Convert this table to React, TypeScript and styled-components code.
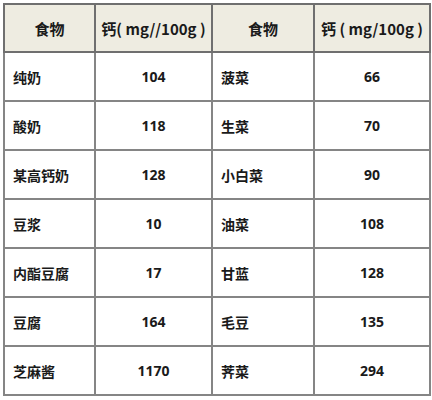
import React from "react"
import styled, {createGlobalStyle} from "styled-components"

const GlobalStyle = createGlobalStyle`
    body {
        margin: 0;
        background: #ffffff;
        font-family: "Noto Sans CJK SC", "Noto Sans", sans-serif;
        color: #1a1a1a;
    }
`

const Page = styled.div`
    padding: 3px 0 0 3px;
`

const Table = styled.table`
    border-collapse: collapse;
    table-layout: fixed;
    width: 426px;
    border: 2px solid #858585;
    font-size: 14px;
`

const HeadCell = styled.th`
    height: 46px;
    padding: 0;
    background: #eeece1;
    border: 2px solid #6f6f6f;
    font-size: 15px;
    font-weight: 700;
    text-align: center;
    white-space: nowrap;
    overflow: visible;
`

const Row = styled.tr`
    height: 49px;
`

const NameCell = styled.td`
    padding: 0 0 0 8px;
    border: 2px solid #858585;
    font-weight: 700;
    text-align: left;
    white-space: nowrap;
`

const ValueCell = styled.td`
    padding: 0;
    border: 2px solid #858585;
    font-family: "Noto Sans", "Noto Sans CJK SC", sans-serif;
    font-weight: 700;
    text-align: center;
`

type Item = {name: string, value: number}

const left: Item[] = [
    {name: "纯奶", value: 104},
    {name: "酸奶", value: 118},
    {name: "某高钙奶", value: 128},
    {name: "豆浆", value: 10},
    {name: "内酯豆腐", value: 17},
    {name: "豆腐", value: 164},
    {name: "芝麻酱", value: 1170},
]

const right: Item[] = [
    {name: "菠菜", value: 66},
    {name: "生菜", value: 70},
    {name: "小白菜", value: 90},
    {name: "油菜", value: 108},
    {name: "甘蓝", value: 128},
    {name: "毛豆", value: 135},
    {name: "荠菜", value: 294},
]

export default function App() {
    return (
        <Page>
            <GlobalStyle />
            <Table>
                <colgroup>
                    <col style={{width: 91}} />
                    <col style={{width: 117}} />
                    <col style={{width: 102}} />
                    <col style={{width: 116}} />
                </colgroup>
                <thead>
                    <tr>
                        <HeadCell>食物</HeadCell>
                        <HeadCell>钙( mg//100g )</HeadCell>
                        <HeadCell>食物</HeadCell>
                        <HeadCell>钙 ( mg/100g )</HeadCell>
                    </tr>
                </thead>
                <tbody>
                    {left.map((item, i) => (
                        <Row key={item.name}>
                            <NameCell>{item.name}</NameCell>
                            <ValueCell>{item.value}</ValueCell>
                            <NameCell>{right[i].name}</NameCell>
                            <ValueCell>{right[i].value}</ValueCell>
                        </Row>
                    ))}
                </tbody>
            </Table>
        </Page>
    )
}
